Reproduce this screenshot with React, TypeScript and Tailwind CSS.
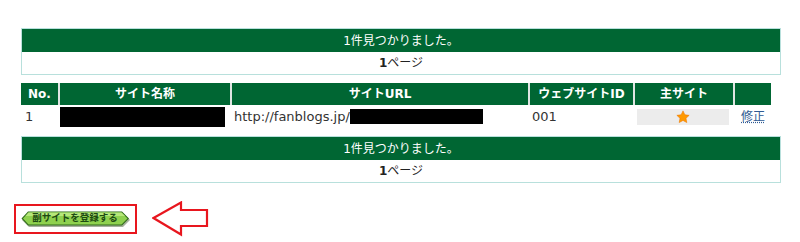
const font = { fontFamily: '"DejaVu Sans", "Noto Sans CJK JP", sans-serif' };

function ResultBox() {
  return (
    <div className="w-[760px] border border-[#b8e0dc] text-[12px] leading-none">
      <div className="flex h-[23px] items-center justify-center bg-[#006633] text-white">1件見つかりました。</div>
      <div className="flex h-[22px] items-center justify-center bg-white text-[#222]">
        <span className="font-bold">1</span>ページ
      </div>
    </div>
  );
}

const headers = ["No.", "サイト名称", "サイトURL", "ウェブサイトID", "主サイト", ""];

function SiteTable() {
  return (
    <div className="w-[750px] text-[12px] leading-none">
      <div className="grid h-[22px] grid-cols-[37px_172px_298px_105px_100px_38px]">
        {headers.map((h, i) => (
          <div
            key={i}
            className={
              "flex items-center justify-center bg-[#006633] text-[12px] font-bold text-white " +
              (i > 0 ? "border-l-2 border-[#dfe5e2]" : "")
            }
          >
            {h}
          </div>
        ))}
      </div>
      <div className="grid h-[23px] grid-cols-[37px_172px_298px_105px_100px_38px] items-center text-[13px] text-[#333]">
        <div className="pl-[4px]">1</div>
        <div className="px-[2px]">
          <div className="h-[20px] w-[165px] bg-black" />
        </div>
        <div className="flex items-center pl-[4px]">
          <span>http://fanblogs.jp/</span>
          <span className="h-[15px] w-[133px] bg-black" />
        </div>
        <div className="pl-[4px]">001</div>
        <div className="px-[4px]">
          <div className="flex h-[16px] items-center justify-center bg-[#ececec]">
            <svg width="14" height="14" viewBox="0 0 24 24">
              <path
                d="M12 1.5l3.2 6.8 7.3.9-5.4 5 1.4 7.3L12 17.9l-6.5 3.6 1.4-7.3-5.4-5 7.3-.9z"
                fill="#ff9900"
                stroke="#f07800"
                strokeWidth="1"
              />
            </svg>
          </div>
        </div>
        <div className="pl-[8px] text-[12px]">
          <span className="text-[#2f5a92] underline decoration-dotted">修正</span>
        </div>
      </div>
    </div>
  );
}

function RegisterButton() {
  return (
    <div className="relative h-[17px] w-[110px]">
      <svg className="absolute inset-0" width="110" height="17" viewBox="0 0 110 17">
        <polygon points="8,2 102,2 109,9 102,16 8,16 1,9" fill="#6b7d5a" opacity="0.6" />
        <polygon points="7,0.5 101,0.5 108,7.5 101,14.5 7,14.5 0.5,7.5" fill="#2f6b1a" />
        <polygon points="7.5,1.5 100.5,1.5 106.5,7.5 100.5,13.5 7.5,13.5 2,7.5" fill="#8fd14f" />
        <polygon points="7.5,1.5 100.5,1.5 104,5 4.5,5" fill="#b6e77a" />
      </svg>
      <div className="absolute left-0 top-0 flex h-[15px] w-[108px] items-center justify-center text-[9.5px] font-bold leading-none text-[#1d4a12]">
        副サイトを登録する
      </div>
    </div>
  );
}

export default function App() {
  return (
    <div className="h-[242px] w-[800px] bg-white" style={font}>
      <div className="pl-[21px] pt-[28px]">
        <ResultBox />
        <div className="mt-[8px]">
          <SiteTable />
        </div>
        <div className="mt-[8px]">
          <ResultBox />
        </div>
        <div className="-ml-[7px] mt-[18px] flex items-center gap-[15px]">
          <div className="flex h-[30px] w-[123px] items-center border-2 border-[#e8161e] pl-[5px]">
            <RegisterButton />
          </div>
          <svg width="57" height="36" viewBox="0 0 57 36">
            <polygon
              points="1.5,17 29,1.5 29,9 55,9 55,25 29,25 29,33.5"
              fill="white"
              stroke="#e8161e"
              strokeWidth="2.2"
              strokeLinejoin="miter"
            />
          </svg>
        </div>
      </div>
    </div>
  );
}
